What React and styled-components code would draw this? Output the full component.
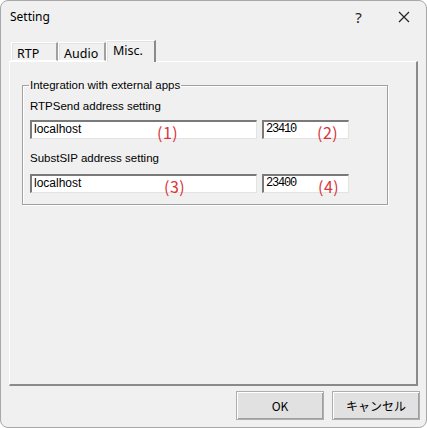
import React from 'react';
import styled, { createGlobalStyle } from 'styled-components';

const GlobalStyle = createGlobalStyle`
  html, body {
    margin: 0;
    padding: 0;
    background: #ffffff;
  }
  body {
    font-family: "Liberation Sans", Arial, sans-serif;
  }
`;

const Window = styled.div`
  box-sizing: border-box;
  width: 427px;
  height: 428px;
  background: #f0f0f0;
  border: 1px solid #a8a8a8;
  border-radius: 8px;
  display: flex;
  flex-direction: column;
  overflow: hidden;
`;

const TitleBar = styled.div`
  height: 31px;
  display: flex;
  align-items: center;
  padding-left: 9px;
  font-family: "Noto Sans", "Open Sans", sans-serif;
  font-size: 12px;
  color: #000;
`;

const Title = styled.span`
  flex: 1;
`;

const TitleButton = styled.div`
  width: 45px;
  height: 31px;
  display: flex;
  align-items: center;
  justify-content: center;
  font-size: 15px;
  color: #222;
`;

const Body = styled.div`
  flex: 1;
  display: flex;
  flex-direction: column;
  padding: 7px 6px 0 8px;
`;

const TabRow = styled.div`
  display: flex;
  align-items: flex-end;
  height: 22px;
  padding-left: 2px;
  position: relative;
  z-index: 1;
`;

const Tab = styled.div`
  box-sizing: border-box;
  width: ${p => p.w}px;
  height: ${p => (p.active ? 22 : 19)}px;
  margin-bottom: ${p => (p.active ? -1 : 0)}px;
  padding-left: ${p => (p.active ? 6 : 5)}px;
  padding-top: ${p => (p.active ? 3 : 4)}px;
  font-family: "Noto Sans", "Open Sans", sans-serif;
  font-size: 12.5px;
  line-height: 14px;
  color: #000;
  background: #f0f0f0;
  border-top: 1px solid #ffffff;
  border-left: 1px solid #ffffff;
  border-right: 2px solid ${p => (p.active ? '#8a8a8a' : '#a0a0a0')};
  border-bottom: ${p => (p.active ? 'none' : '1px solid #ffffff')};
  box-shadow: inset 1px 1px 0 #e3e3e3;
`;

const Panel = styled.div`
  box-sizing: border-box;
  height: 325px;
  margin-right: 2px;
  border-top: 1px solid #ffffff;
  border-left: 1px solid #ffffff;
  border-right: 2px solid #8a8a8a;
  border-bottom: 2px solid #8a8a8a;
  padding: 17px 28px 0 12px;
`;

const GroupBox = styled.fieldset`
  box-sizing: border-box;
  margin: 0;
  height: 126px;
  border: 1px solid #a0a0a0;
  box-shadow: 1px 1px 0 #ffffff, inset 1px 1px 0 #ffffff;
  padding: 5px 0 0 7px;
  font-family: "Liberation Sans", Arial, sans-serif;
  font-size: 11.5px;
  color: #000;
`;

const Legend = styled.legend`
  padding: 0 1px;
  margin-left: -1px;
  font-size: 11.5px;
  line-height: 12px;
`;

const FieldLabel = styled.div`
  font-size: 11.5px;
  line-height: 14px;
  margin: ${p => (p.first ? '3px 0 7px' : '12px 0 9px')};
`;

const InputRow = styled.div`
  display: flex;
  gap: 5px;
`;

const Input = styled.div`
  position: relative;
  box-sizing: border-box;
  width: ${p => p.w}px;
  height: 19px;
  background: #ffffff;
  border-top: 2px solid #7a7a7a;
  border-left: 2px solid #7a7a7a;
  border-right: 1px solid #e3e3e3;
  border-bottom: 1px solid #e3e3e3;
  padding: 1px 0 0 2px;
  font-family: ${p => (p.mono ? '"Liberation Mono", monospace' : '"Liberation Sans", Arial, sans-serif')};
  font-size: 12px;
  letter-spacing: ${p => (p.mono ? -1.2 : 0)}px;
  line-height: 13px;
  color: #000;
`;

const Marker = styled.span`
  position: absolute;
  left: ${p => p.x}px;
  top: 1px;
  font-family: "Noto Sans CJK JP", "Noto Sans", sans-serif;
  font-size: 16px;
  line-height: 18px;
  color: #d8353a;
  letter-spacing: 0.5px;
`;

const Footer = styled.div`
  display: flex;
  justify-content: flex-end;
  gap: 8px;
  padding-top: 5px;
`;

const Button = styled.button`
  box-sizing: border-box;
  width: 88px;
  height: 29px;
  background: #e1e1e1;
  border: 1px solid #adadad;
  box-shadow: inset 1px 1px 0 #ffffff, inset -1px -1px 0 #a0a0a0;
  font-family: "Noto Sans CJK JP", "Noto Sans", sans-serif;
  font-size: 12px;
  color: #000;
  padding: 0;
`;

export default function App() {
  return (
    <>
      <GlobalStyle />
      <Window>
        <TitleBar>
          <Title>Setting</Title>
          <TitleButton>?</TitleButton>
          <TitleButton>
            <svg width="12" height="12" viewBox="0 0 12 12">
              <path d="M1 1 L11 11 M11 1 L1 11" stroke="#222" strokeWidth="1.2" />
            </svg>
          </TitleButton>
        </TitleBar>
        <Body>
          <TabRow>
            <Tab w={47}>RTP</Tab>
            <Tab w={48}>Audio</Tab>
            <Tab w={50} active>Misc.</Tab>
          </TabRow>
          <Panel>
            <GroupBox>
              <Legend>Integration with external apps</Legend>
              <FieldLabel first>RTPSend address setting</FieldLabel>
              <InputRow>
                <Input w={227}>
                  localhost
                  <Marker x={125}>(1)</Marker>
                </Input>
                <Input w={87} mono>
                  23410
                  <Marker x={53}>(2)</Marker>
                </Input>
              </InputRow>
              <FieldLabel>SubstSIP address setting</FieldLabel>
              <InputRow>
                <Input w={227}>
                  localhost
                  <Marker x={132}>(3)</Marker>
                </Input>
                <Input w={87} mono>
                  23400
                  <Marker x={54}>(4)</Marker>
                </Input>
              </InputRow>
            </GroupBox>
          </Panel>
          <Footer>
            <Button>OK</Button>
            <Button>キャンセル</Button>
          </Footer>
        </Body>
      </Window>
    </>
  );
}
